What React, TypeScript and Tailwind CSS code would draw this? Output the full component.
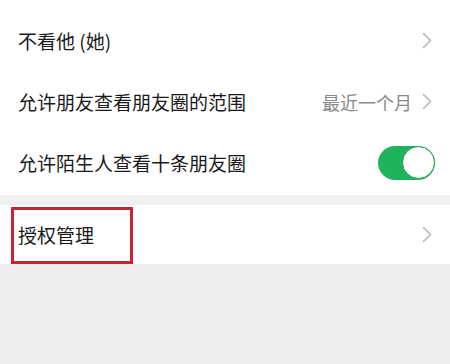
import React from "react";

function Chevron() {
  return (
    <svg width="10" height="17" viewBox="0 0 10 17" className="shrink-0">
      <path d="M1.5 1.5 L8.5 8.5 L1.5 15.5" fill="none" stroke="#b8b8b8" strokeWidth="1.6" strokeLinecap="round" strokeLinejoin="round" />
    </svg>
  );
}

function Row({ label, right }: { label: string; right?: React.ReactNode }) {
  return (
    <div className="flex h-[61px] items-center justify-between pl-[18px] pr-[18px]">
      <span className="text-[19px] text-[#1a1a1a] leading-none">{label}</span>
      {right}
    </div>
  );
}

export default function App() {
  return (
    <div
      className="w-[450px] h-[364px] bg-[#ededed] overflow-hidden"
      style={{ fontFamily: '"Noto Sans CJK SC", "Noto Sans", sans-serif' }}
    >
      <div className="bg-white pt-[10px] pb-[2px]">
        <Row label="不看他 (她)" right={<Chevron />} />
        <Row
          label="允许朋友查看朋友圈的范围"
          right={
            <div className="flex items-center gap-[10px]">
              <span className="text-[18px] text-[#8a8a8a] leading-none">最近一个月</span>
              <Chevron />
            </div>
          }
        />
        <div className="flex h-[61px] items-center justify-between pl-[18px] pr-[15px]">
          <span className="text-[19px] text-[#1a1a1a] leading-none">允许陌生人查看十条朋友圈</span>
          <div className="flex h-[34px] w-[57px] items-center justify-end rounded-full bg-[#1fb45b]">
            <div className="h-[33px] w-[33px] rounded-full border border-[#1a9c4e] bg-white" />
          </div>
        </div>
      </div>
      <div className="h-[10px] bg-[#efefef]" />
      <div className="relative flex h-[59px] items-center justify-between bg-white pl-[18px] pr-[18px]">
        <span className="text-[19px] text-[#1a1a1a] leading-none">授权管理</span>
        <Chevron />
        <div className="absolute left-[11px] top-[2px] h-[57px] w-[122px] border-[3px] border-[#c62530]" />
      </div>
    </div>
  );
}
